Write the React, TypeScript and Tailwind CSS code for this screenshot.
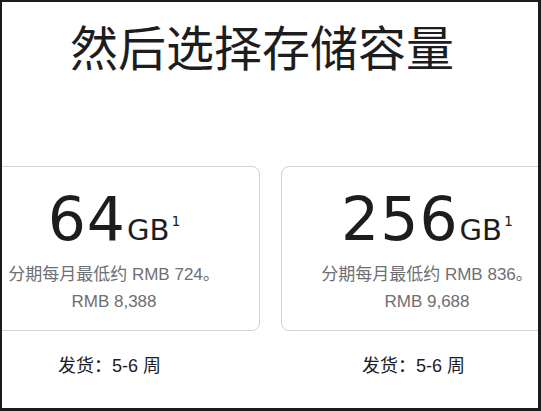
import React from 'react';

interface StorageOption {
  size: string;
  monthly: string;
  price: string;
}

const options: StorageOption[] = [
  { size: '64', monthly: '724', price: '8,388' },
  { size: '256', monthly: '836', price: '9,688' },
];

const cjk = { fontFamily: '"Noto Sans CJK SC", "Liberation Sans", sans-serif' };
const mixed = { fontFamily: '"Liberation Sans", "Noto Sans CJK SC", sans-serif' };
const display = { fontFamily: '"DejaVu Sans", "Liberation Sans", sans-serif' };

function StorageCard({ option }: { option: StorageOption }) {
  return (
    <div className="w-[292px] h-[165px] shrink-0 rounded-[8px] border border-[#d2d2d7] flex flex-col items-center pt-[22px]">
      <div className="flex items-baseline text-[#1d1d1f] leading-none" style={display}>
        <span className="text-[60px] tracking-[1px]">{option.size}</span>
        <span className="text-[29px] ml-[1px]">GB</span>
        <span className="relative top-[-14px] text-[14px] ml-[2px]">1</span>
      </div>
      <p className="mt-[12px] text-[17px] leading-[27px] text-[#6e6e73] text-center" style={mixed}>
        分期每月最低约 RMB {option.monthly}。
        <br />
        RMB {option.price}
      </p>
    </div>
  );
}

export default function App() {
  return (
    <div className="w-[541px] h-[411px] overflow-hidden bg-white border-t-2 border-l-2 border-r-[3px] border-b-[3px] border-[#1b1b1b]">
      <h1 className="mt-[19px] pr-[16px] text-center text-[48px] leading-none font-normal text-[#1d1d1f]" style={cjk}>
        然后选择存储容量
      </h1>

      <div className="mt-[97px] ml-[-34px] flex gap-[21px]">
        {options.map((option) => (
          <StorageCard key={option.size} option={option} />
        ))}
      </div>

      <div className="mt-[26px] ml-[56px] flex text-[18px] leading-none text-[#1d1d1f]" style={mixed}>
        {options.map((option) => (
          <div key={option.size} className="w-[304px] shrink-0">
            发货：5-6 周
          </div>
        ))}
      </div>
    </div>
  );
}
